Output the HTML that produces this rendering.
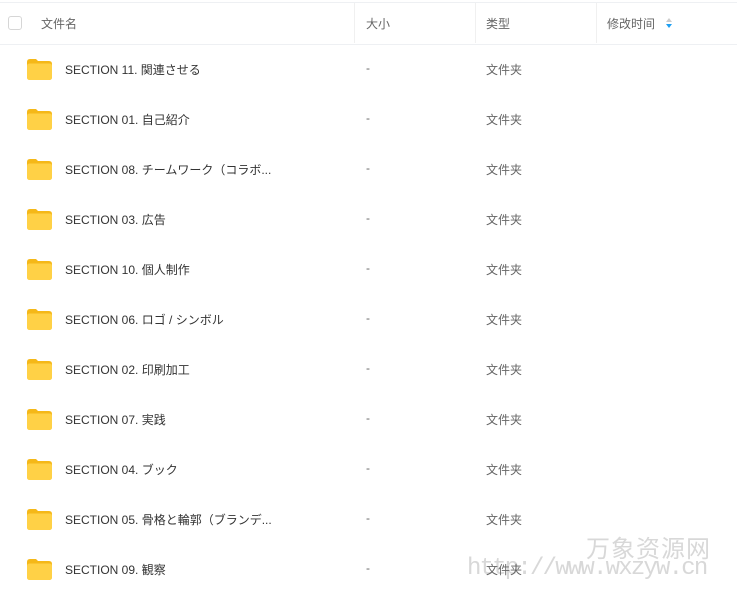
<!DOCTYPE html>
<html><head><meta charset="utf-8"><style>
body{margin:0;width:737px;height:603px;background:#fff;font-family:"Liberation Sans","Noto Sans CJK SC",sans-serif;font-size:12px;color:#333;position:relative;overflow:hidden}
.hdr{position:absolute;left:0;top:2px;width:737px;height:41px;border-top:1px solid #eef0f3;border-bottom:1px solid #eef0f3}
.hdr span{position:absolute;top:12px;color:#666;font-size:12px}
.div{position:absolute;top:3px;height:40px;width:1px;background:#f0f0f0}
.cb{position:absolute;left:8px;top:13px;width:12px;height:12px;border:1px solid #d6d6d6;border-radius:3px}
.row{position:absolute;left:0;width:737px;height:50px}
.row .n{position:absolute;left:65px;top:17px;color:#333}
.row .s{position:absolute;left:366px;top:17px;color:#666}
.row .t{position:absolute;left:486px;top:17px;color:#666}
.f{position:absolute;left:27px;top:15px;width:25px;height:21px}
.wm1{position:absolute;left:586px;top:529px;font-size:24px;color:#d8d8d8;letter-spacing:1px}
.wm2{position:absolute;left:467px;top:555px;font-size:24px;color:#d8d8d8;font-family:"Liberation Mono",monospace;letter-spacing:-1.8px}
</style></head><body>
<div class="hdr"><div class="cb"></div>
<span style="left:41px">文件名</span><span style="left:366px">大小</span><span style="left:486px">类型</span><span style="left:607px">修改时间</span>
<svg style="position:absolute;left:666px;top:15px" width="6" height="10"><path d="M3 0L6 4H0Z" fill="#ccc"/><path d="M3 10L6 6H0Z" fill="#1e9ff2"/></svg>
</div>
<div class="div" style="left:354px"></div><div class="div" style="left:475px"></div><div class="div" style="left:596px"></div>
<div class="wm1">万象资源网</div><div class="wm2">http://www.wxzyw.cn</div>
<div id="rows"></div>
<script>
var n=["SECTION 11. 関連させる","SECTION 01. 自己紹介","SECTION 08. チームワーク（コラボ...","SECTION 03. 広告","SECTION 10. 個人制作","SECTION 06. ロゴ / シンボル","SECTION 02. 印刷加工","SECTION 07. 実践","SECTION 04. ブック","SECTION 05. 骨格と輪郭（ブランデ...","SECTION 09. 観察"];
var h="";n.forEach(function(s,i){h+='<div class="row" style="top:'+(44+i*50)+'px"><svg class="f" viewBox="0 0 25 21"><path d="M0 3Q0 0 3 0H9L11 2H22Q25 2 25 5V18Q25 21 22 21H3Q0 21 0 18Z" fill="#f5b818"/><path d="M0 7Q0 4.5 3 4.5H22Q25 4.5 25 7V18Q25 21 22 21H3Q0 21 0 18Z" fill="#ffd146"/></svg><span class="n">'+s+'</span><span class="s">-</span><span class="t">文件夹</span></div>'});
document.getElementById("rows").innerHTML=h;
</script>
</body></html>
